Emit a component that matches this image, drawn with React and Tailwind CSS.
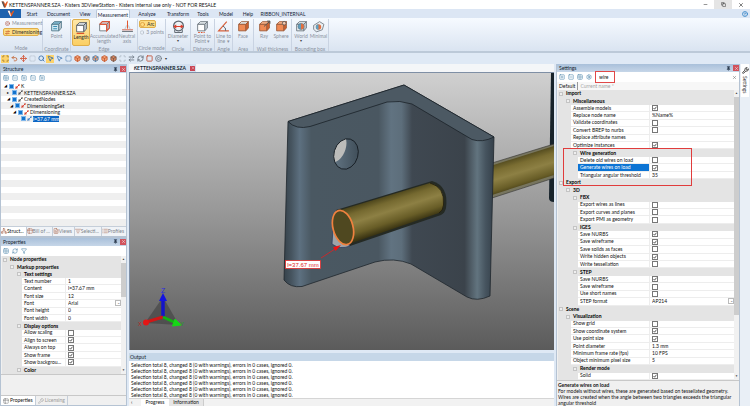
import React from "react";
import {
  Scan, Undo2, Move, Search, MousePointer2, Box, SquareDashed, RefreshCw, Square,
  Circle, Minus, X, Copy, HelpCircle, Wrench, SquarePlus, SquareMinus, Grid2x2, Filter,
  Table2, Network, Pin, Settings as Gear, ArrowRightLeft, Copyright, List, FileText, ListFilter,
} from "lucide-react";

/* ---------- ribbon drawings ---------- */

function Cube({ top = "#e4eaee", front = "#fff", side = "#c3ccd4", line = "#6b747c", children }) {
  return (
    <svg viewBox="0 0 24 24" className="size-[13px] shrink-0" aria-hidden="true">
      <path d="M3 8 L8 3 H21 L16 8Z" fill={top} stroke={line} strokeWidth="1.6" />
      <path d="M16 8 L21 3 V15 L16 20Z" fill={side} stroke={line} strokeWidth="1.6" />
      <path d="M3 8 H16 V20 H3Z" fill={front} stroke={line} strokeWidth="1.6" />
      {children}
    </svg>
  );
}

const ORANGE = { top: "#f9b48c", front: "#f08a55", side: "#d2622f", line: "#9a5a3a" };

const icons = {
  point: (
    <Cube front="#cfe9f5" top="#7fb7cf" line="#4d7587">
      <path d="M6 12h7M6 16h7" stroke="#3b8fb3" strokeWidth="2" />
    </Cube>
  ),
  length: (
    <Cube line="#4f575e">
      <path d="M3 23H17" stroke="#e0522a" strokeWidth="2" />
    </Cube>
  ),
  accumulated: (
    <Cube>
      <path d="M3 8 L8 3 H21 V15 L16 20 V8 H3" fill="none" stroke="#dd5a3c" strokeWidth="2.2" />
    </Cube>
  ),
  neutral: (
    <svg viewBox="0 0 24 24" className="size-[13px]" aria-hidden="true">
      <path d="M12 1V16" stroke="#e0522a" strokeWidth="1.8" />
      <path d="M2 21H22" stroke="#5d666e" strokeWidth="1.8" />
      <path d="M2 18H22" stroke="#dd5a3c" strokeWidth="1.6" />
      <path d="M5 18q4-1 5-8M19 18q-4-1-5-8" fill="none" stroke="#a9b0b6" strokeWidth="1.2" />
    </svg>
  ),
  diameter: (
    <svg viewBox="0 0 24 24" className="size-[13px]" aria-hidden="true">
      <circle cx="12" cy="11" r="9" fill="#eef2f5" stroke="#5d666e" strokeWidth="2.4" />
      <path d="M3 12H21M8 9l-4 3 4 3M16 9l4 3-4 3" fill="none" stroke="#dd3d2a" strokeWidth="2" />
      <path d="M5 18V23H19V18" fill="none" stroke="#5d666e" strokeWidth="1.8" />
    </svg>
  ),
  distance: (
    <Cube>
      <path d="M4 23h12" stroke="#e0522a" strokeWidth="2" strokeDasharray="3 2" />
    </Cube>
  ),
  angle: (
    <svg viewBox="0 0 24 24" className="size-[13px]" aria-hidden="true">
      <path d="M18 3 L3 20 H22" fill="none" stroke="#d8603a" strokeWidth="2.2" />
      <path d="M11 11 q6 3 5 9" fill="none" stroke="#5d666e" strokeWidth="1.8" />
    </svg>
  ),
  face: <Cube {...ORANGE} top="#e4eaee" />,
  ray: (
    <Cube {...ORANGE}>
      <path d="M11 12 L22 2 M17 2h5v5" fill="none" stroke="#555" strokeWidth="1.8" />
    </Cube>
  ),
  sphere: (
    <Cube {...ORANGE}>
      <circle cx="17" cy="6" r="3.4" fill="#f7c6ab" stroke="#555" strokeWidth="1.5" />
    </Cube>
  ),
  world: (
    <Cube front="#e8eef2">
      <circle cx="11" cy="12" r="5.5" fill="#5f9fc0" stroke="#4c6b7a" />
      <path d="M11 6.5a5.5 5.5 0 0 1 0 11z" fill="#e2703f" />
    </Cube>
  ),
  minimal: (
    <svg viewBox="0 0 24 24" className="size-[13px]" aria-hidden="true">
      <path d="M3 10 L14 3 L22 8 L19 18 L8 22 L3 17Z" fill="#e8eef2" stroke="#6b747c" strokeWidth="1.5" />
      <circle cx="12" cy="13" r="5" fill="#e2703f" />
      <path d="M12 8a5 5 0 0 0 0 10z" fill="#5f9fc0" />
    </svg>
  ),
};

function Tool({ icon, lines, width, active, arrow }) {
  return (
    <button
      className={`flex h-[27px] flex-col items-center pt-px ${width} ${
        active ? "rounded-xs border border-[#dfae4a] bg-linear-to-b from-[#fde7a8] to-[#fbcf63] text-[#2b2b2b]" : "text-[#8a92a0]"
      }`}
    >
      {icons[icon]}
      <span className="mt-px flex flex-col items-center text-[5px] leading-[5px] whitespace-nowrap">
        {lines.map((l) => <span key={l}>{l}</span>)}
      </span>
      {arrow && <span className="text-[4px] leading-[4px] text-[#444]">▾</span>}
    </button>
  );
}

function Group({ title, width, children }) {
  return (
    <div className={`flex flex-col justify-between border-r border-[#c9d3e2] ${width}`}>
      <div className="flex justify-center">{children}</div>
      <div className="text-center text-[5px] leading-[6px] whitespace-nowrap text-[#8a92a0]">{title}</div>
    </div>
  );
}

const ribbonTabs = [
  ["Start", "w-[22px]"], ["Document", "w-[31px]"], ["View", "w-[22px]"], ["Measurement", "w-[34px]"],
  ["Analyze", "w-[34px]"], ["Transform", "w-[28px]"], ["Tools", "w-[22px]"], ["Model", "w-[24px]"],
  ["Help", "w-[20px]"], ["RIBBON_INTERNAL", "w-[50px]"],
];

function Ribbon() {
  return (
    <>
      <header className="flex h-[9px] items-center bg-white">
        <svg viewBox="0 0 12 12" className="mx-px size-[7px]" aria-hidden="true">
          <path d="M1 1h4l2 4 3-4h2L8 11H6Z" fill="#e2571f" />
          <path d="M1 1l4 10h2L4 1Z" fill="#555" />
        </svg>
        <h1 className="flex-1 text-[5px] leading-[8px] text-[#111]">
          KETTENSPANNER.SZA - Kisters 3DViewStation - Kisters internal use only - NOT FOR RESALE
        </h1>
        <button aria-label="Minimize" className="flex h-full w-[18px] items-center justify-center"><Minus className="size-[5px]" /></button>
        <button aria-label="Restore" className="flex h-full w-[18px] items-center justify-center bg-[#e5e5e5]"><Copy className="size-[5px]" /></button>
        <button aria-label="Close" className="flex h-full w-[18px] items-center justify-center"><X className="size-[6px]" /></button>
      </header>
      <nav className="flex h-[9px] items-end bg-[#dce6f4]">
        <button aria-label="File" className="flex h-full w-[21px] items-center justify-center bg-[#1f62ae]">
          <svg viewBox="0 0 12 10" className="h-[7px] w-2" aria-hidden="true">
            <path d="M1 1h3l2 4 3-4h2L7 9H5Z" fill="#e2571f" /><path d="M1 1l4 8h1L4 1Z" fill="#fff" />
          </svg>
        </button>
        {ribbonTabs.map(([t, w]) => (
          <button
            key={t}
            className={`h-full text-center text-[5px] leading-[10px] whitespace-nowrap text-[#17253a] ${w} ${
              t === "Measurement" ? "rounded-t-xs border border-b-0 border-[#b9c7da] bg-[#f8fbff]" : ""
            }`}
          >
            {t}
          </button>
        ))}
        <span className="flex-1" />
        <button aria-label="Help" className="mr-[2px] self-center"><HelpCircle className="size-[6px] text-[#2b7fc4]" strokeWidth={3} /></button>
      </nav>
      <section className="flex h-[35px] border-b-2 border-[#bcc9d8] bg-linear-to-b from-[#f6faff] to-[#dae4f1] pt-px">
        <Group title="Mode" width="w-[43px]">
          <div className="flex w-full flex-col gap-px px-[3px] pt-px text-[5px] leading-[7px]">
            <button className="flex items-center gap-[2px] pl-[2px] text-[#8a92a0]"><Copyright className="size-[5px] shrink-0 text-[#b9695a]" strokeWidth={3} />Measurement</button>
            <button className="flex h-2 items-center gap-[2px] rounded-xs border border-[#dfae4a] bg-[#fddc82] pl-px text-[#2b2b2b]"><ArrowRightLeft className="size-[5px] shrink-0 text-[#c5532c]" strokeWidth={3} />Dimensioning</button>
          </div>
        </Group>
        <Group title="Coordinate" width="w-[28px]"><Tool icon="point" lines={["Point"]} width="w-[20px]" /></Group>
        <Group title="Edge" width="w-[67px]">
          <Tool icon="length" lines={["Length"]} width="w-[18px]" active />
          <Tool icon="accumulated" lines={["Accumulated", "length"]} width="w-[28px]" />
          <Tool icon="neutral" lines={["Neutral", "axis"]} width="w-[18px]" />
        </Group>
        <Group title="Circle mode" width="w-[28px]">
          <div className="flex w-full flex-col gap-px px-px pt-px text-[5px] leading-[7px]">
            <button className="flex h-2 w-[17px] items-center gap-[2px] rounded-xs border border-[#dfae4a] bg-[#fddc82] text-[#2b2b2b]"><Circle className="size-[5px] text-[#d98a2b]" strokeWidth={3} />Arc</button>
            <button className="flex items-center gap-[2px] pl-px whitespace-nowrap text-[#8a92a0]"><Circle className="size-[5px]" />3 points</button>
          </div>
        </Group>
        <Group title="Circle" width="w-[25px]"><Tool icon="diameter" lines={["Diameter"]} width="w-[22px]" arrow /></Group>
        <Group title="Distance" width="w-[24px]"><Tool icon="distance" lines={["Point to", "Point ▾"]} width="w-[22px]" /></Group>
        <Group title="Angle" width="w-[18px]"><Tool icon="angle" lines={["Line to", "line ▾"]} width="w-[17px]" /></Group>
        <Group title="Area" width="w-[21px]"><Tool icon="face" lines={["Face"]} width="w-[18px]" /></Group>
        <Group title="Wall thickness" width="w-[38px]">
          <Tool icon="ray" lines={["Ray"]} width="w-[17px]" />
          <Tool icon="sphere" lines={["Sphere"]} width="w-[17px]" />
        </Group>
        <Group title="Bounding box" width="w-[37px]">
          <Tool icon="world" lines={["World"]} width="w-[17px]" arrow />
          <Tool icon="minimal" lines={["Minimal"]} width="w-[18px]" />
        </Group>
      </section>
    </>
  );
}

const quick = [
  [Scan, "text-[#8c6a2c]", true], [Undo2, "text-[#c46a3c]"], [Move, "text-[#d2573a]"],
  [SquareDashed, "text-[#b9c3d0]"], [Search, "text-[#3f74ad]"], [MousePointer2, "text-[#3f74ad]", true],
  [MousePointer2, "text-[#5586bb]"], [SquareDashed, "text-[#6c93c0]"], [Box, "fill-[#f2a074] text-[#c65a30]"],
  [Box, "fill-[#e8a98a] text-[#6c7782]"], [Box, "fill-[#f2a074] text-[#4a7fae]"], [Box, "fill-[#f2a074] text-[#c65a30]"],
  [Box, "fill-[#d9835c] text-[#7a5a4c]"], [Scan, "text-[#a9b3c0]"], [ArrowRightLeft, "text-[#6c7782]"],
  [RefreshCw, "text-[#6c7782]"], [Square, "text-[#c4553a]"], [Copyright, "text-[#6c7782]"],
];

function QuickBar() {
  return (
    <div className="flex h-[11px] items-center gap-px bg-[#dfe9f5] pl-px">
      {quick.map(([Icon, c, on], i) => (
        <button key={i} aria-label={`Quick action ${i + 1}`} className={`flex size-2 items-center justify-center ${on ? "bg-[#fdd36b]" : ""}`}>
          <Icon className={`size-[7px] ${c}`} strokeWidth={3} />
        </button>
      ))}
      <span className="pl-[2px] text-[4px] text-[#333]">▾</span>
    </div>
  );
}

/* ---------- shared panel parts ---------- */

function PanelHeader({ title }) {
  return (
    <div className="flex h-2 shrink-0 items-center gap-[2px] bg-linear-to-b from-[#a9c0da] to-[#c6d6e8] pl-[2px]">
      <h2 className="flex-1 text-[5px] leading-[8px] text-[#111c2c]">{title}</h2>
      <button aria-label={`Pin ${title}`}><Pin className="size-[5px] fill-current text-[#2d3c50]" /></button>
      <button aria-label={`Close ${title}`} className="flex size-[6px] items-center justify-center bg-[#d0525c]"><X className="size-[5px] text-white" /></button>
    </div>
  );
}

function Bar({ list, children }) {
  return (
    <div className="flex h-[10px] shrink-0 items-center gap-[3px] bg-white pl-[2px]">
      {list.map((Icon, i) => (
        <button key={i} aria-label={`Panel action ${i + 1}`}><Icon className="size-[6px] text-[#3d7ba3]" strokeWidth={2} /></button>
      ))}
      {children}
    </div>
  );
}

const indents = {
  0: "w-[6px]", 1: "w-[13px]", 2: "w-[20px]",
};

function Row({ row, nameCol, id }) {
  const [kind, level, name, value, selected] = row;
  if (kind === "h") {
    return (
      <div className="flex items-center overflow-hidden bg-[#e4e4e4]">
        <span className={`flex shrink-0 justify-end pr-px ${indents[level]}`}>
          <span className="flex size-1 items-center justify-center border border-[#c4c4c4] bg-[#efefef]" />
        </span>
        <h3 className="pl-[2px] text-[5px] leading-[7px] font-bold text-black">{name}</h3>
      </div>
    );
  }
  return (
    <div className="flex overflow-hidden bg-[#e4e4e4]">
      <span className={`shrink-0 ${indents[level]}`} />
      <div className="flex min-w-0 flex-1 items-center border-b border-[#ededed] bg-white">
        <label
          htmlFor={id}
          className={`mr-auto min-w-0 flex-1 truncate pl-[2px] text-[5px] leading-[7px] ${selected ? "bg-[#0c74d4] text-white" : "text-[#111]"}`}
        >
          {name}
        </label>
        <div className={`flex h-full items-center border-l border-[#ededed] pl-[2px] text-[5px] leading-[7px] text-[#111] ${nameCol}`}>
          {kind === "c" && (
            <span className="relative flex">
              <input
                id={id}
                type="checkbox"
                defaultChecked={value}
                className="peer size-[6px] appearance-none border border-[#777] bg-white"
              />
              <svg viewBox="0 0 6 6" className="pointer-events-none absolute inset-0 hidden size-[6px] peer-checked:block" aria-hidden="true">
                <path d="M1.500 3 L2.600 4.200 L4.500 1.700" fill="none" stroke="#333" strokeWidth="0.8" />
              </svg>
            </span>
          )}
          {kind === "t" && <input id={id} defaultValue={value} className="h-[6px] w-full min-w-0 bg-transparent" />}
          {kind === "s" && (
            <>
              <select id={id} className="h-[6px] min-w-0 flex-1 appearance-none bg-transparent"><option>{value}</option></select>
              <span className="flex size-[6px] items-center justify-center border border-[#bbb] text-[4px] leading-[4px] text-[#555]">⌄</span>
            </>
          )}
        </div>
      </div>
    </div>
  );
}

function Scrollbar({ thumb }) {
  return (
    <div className="flex w-[5px] shrink-0 flex-col items-center bg-[#f1f1f1] text-[3px] leading-[7px] text-[#444]">
      <span>▲</span>
      <span className={`w-full bg-[#cdcdcd] ${thumb}`} />
      <span className="mt-auto">▼</span>
    </div>
  );
}

/* ---------- left column ---------- */

const tree = [
  ["pl-[3px]", "◢", "K", "#d8402e"],
  ["pl-[6px]", "▸", "KETTENSPANNER.SZA", "#555"],
  ["pl-[6px]", "◢", "CreatedNodes", "#555"],
  ["pl-[9px]", "◢", "DimensioningSet", "#d8402e"],
  ["pl-[12px]", "◢", "Dimensioning", "#d8402e"],
  ["pl-[15px]", "", "l=37.67 mm", "#3f7fc8", true],
];

function Structure() {
  return (
    <section className="flex flex-[173] flex-col overflow-hidden border border-[#b5c3d3] bg-white">
      <PanelHeader title="Structure" />
      <Bar list={[Grid2x2, SquareMinus, SquarePlus, SquareMinus, SquarePlus]} />
      <ul className="grid min-h-0 flex-1 auto-rows-fr">
        {Array.from({ length: 22 }, (_, i) => {
          const n = tree[i];
          return (
            <li key={i} className={`flex items-center gap-px text-[5px] leading-[6px] odd:bg-white even:bg-[#efefef] ${n ? n[0] : ""}`}>
              {n && (
                <>
                  <span className="w-1 text-[4px]">{n[1]}</span>
                  <span className="size-[5px] border border-[#7fb6ea] bg-[#1473cc]" />
                  <svg viewBox="0 0 10 10" className="size-[5px]" aria-hidden="true">
                    <path d="M1 9L9 1" stroke={n[3]} strokeWidth="1.6" /><path d="M1 5h4v4H1zM6 1h3v3H6z" fill={n[3]} />
                  </svg>
                  <span className={n[4] ? "bg-[#0c66c4] text-white" : "text-[#111]"}>{n[2]}</span>
                </>
              )}
            </li>
          );
        })}
      </ul>
      <div className="flex h-[10px] shrink-0 border-t border-[#c5ced9] bg-[#f0f3f7] text-[5px] leading-[9px] text-[#7d838b]">
        {[["Struct...", Network], ["Bill of ...", Table2], ["Views", FileText], ["Selecti...", ListFilter], ["Profiles", List]].map(([t, Icon], i) => (
          <button key={t} className={`flex flex-auto items-center border-r border-[#c5ced9] whitespace-nowrap last:border-r-0 ${i === 0 ? "bg-white text-[#111]" : ""}`}>
            <Icon className="size-[6px] shrink-0 text-[#a8664c]" />{t}
          </button>
        ))}
      </div>
    </section>
  );
}

const properties = [
  ["h", 0, "Node properties"], ["h", 1, "Markup properties"], ["h", 2, "Text settings"],
  ["t", 2, "Text number", "1"], ["t", 2, "Content", "l=37.67 mm"], ["t", 2, "Font size", "12"],
  ["s", 2, "Font", "Arial"], ["t", 2, "Font height", "0"], ["t", 2, "Font width", "0"],
  ["h", 2, "Display options"], ["c", 2, "Allow scaling", false], ["c", 2, "Align to screen", true],
  ["c", 2, "Always on top", true], ["c", 2, "Show frame", true], ["c", 2, "Show backgrou...", true],
  ["h", 2, "Color"],
];

function Properties() {
  return (
    <section className="flex flex-[169] flex-col overflow-hidden border border-[#b5c3d3] bg-[#f0f0f0]">
      <PanelHeader title="Properties" />
      <Bar list={[Grid2x2, RefreshCw, Filter]} />
      <div className="flex min-h-0 flex-1 border-b border-[#c8c8c8]">
        <div className="grid min-w-0 flex-1 auto-rows-fr pl-px">
          {properties.map((r, i) => <Row key={i} row={r} id={`prop-${i}`} nameCol="w-[56px]" />)}
        </div>
        <Scrollbar thumb="h-[34px]" />
      </div>
      <div className="h-[21px] shrink-0 border-b border-[#c8c8c8]" />
      <div className="flex h-[9px] shrink-0 text-[5px] leading-[9px]">
        <button className="flex items-center gap-px bg-white px-[2px] text-[#111]"><Table2 className="size-[6px] text-[#777]" />Properties</button>
        <button className="flex items-center gap-px border-x border-[#c5ced9] px-[2px] text-[#9a9a9a]"><Wrench className="size-[6px]" />Licensing</button>
      </div>
    </section>
  );
}

/* ---------- 3D view ---------- */

function Scene() {
  return (
    <svg viewBox="130 73 424 277" preserveAspectRatio="xMidYMid slice" className="block size-full font-['Liberation_Sans',sans-serif]" role="img" aria-label="3D model">
      <defs>
        <linearGradient id="sky" x1="0" y1="0" x2="0" y2="1">
          <stop offset="0" stopColor="#d0d0d0" /><stop offset="0.5" stopColor="#989898" /><stop offset="1" stopColor="#5b5b5b" />
        </linearGradient>
        <linearGradient id="front" gradientUnits="userSpaceOnUse" x1="284" y1="0" x2="494" y2="0">
          <stop offset="0" stopColor="#36424b" /><stop offset="0.035" stopColor="#46545f" />
          <stop offset="0.075" stopColor="#5d7080" /><stop offset="0.13" stopColor="#4a5862" />
          <stop offset="0.45" stopColor="#4a5761" /><stop offset="0.51" stopColor="#617381" />
          <stop offset="0.56" stopColor="#5d6e7b" /><stop offset="0.61" stopColor="#3f4851" />
          <stop offset="0.86" stopColor="#3b434b" /><stop offset="0.92" stopColor="#62747f" />
          <stop offset="0.96" stopColor="#46545f" /><stop offset="1" stopColor="#35404a" />
        </linearGradient>
        <linearGradient id="rod" gradientUnits="userSpaceOnUse" x1="384" y1="196" x2="395" y2="230">
          <stop offset="0" stopColor="#4a431a" /><stop offset="0.2" stopColor="#756930" />
          <stop offset="0.45" stopColor="#8d8044" /><stop offset="0.75" stopColor="#685d27" /><stop offset="1" stopColor="#2f2a0e" />
        </linearGradient>
        <linearGradient id="rodBack" gradientUnits="userSpaceOnUse" x1="521" y1="154" x2="531" y2="187">
          <stop offset="0" stopColor="#4a431a" /><stop offset="0.25" stopColor="#7a6d32" />
          <stop offset="0.5" stopColor="#8d8044" /><stop offset="0.8" stopColor="#685d27" /><stop offset="1" stopColor="#3a3413" />
        </linearGradient>
        <linearGradient id="bore" x1="0" y1="0" x2="1" y2="0">
          <stop offset="0" stopColor="#6a7d8c" /><stop offset="1" stopColor="#33404a" />
        </linearGradient>
        <clipPath id="holeClip"><ellipse cx="346" cy="154" rx="12" ry="15.5" transform="rotate(16 346 154)" /></clipPath>
      </defs>
      <rect x="130" y="73" width="424" height="277" fill="url(#sky)" />

      <path d="M551 73H554V202Q549 202 549 198Z" fill="#17232b" />
      <path d="M492 163L554 144V178L492 198Z" fill="#77755f" stroke="#333" strokeWidth="0.6" />
      <path d="M492 165.500L554 146V175L492 195Z" fill="url(#rodBack)" />

      <path d="M288 121.500L404 85L494 137L490 296Q477 302 467 297L411 264Q394 257 375 262L302 286.500Q290 288 284 280Z" fill="url(#front)" stroke="#1e262c" strokeWidth="0.8" />
      <path d="M288 121.500L404 85L494 137Q482 143 472 139.500L412 104Q400 100 387 102L310 126.500Q296 130 288 121.500Z" fill="#4c5963" stroke="#1b2228" strokeWidth="0.8" />

      <g clipPath="url(#holeClip)">
        <rect x="328" y="134" width="40" height="40" fill="url(#bore)" />
        <ellipse cx="334" cy="146" rx="12" ry="17" transform="rotate(16 334 146)" fill="#bcbcba" />
      </g>
      <ellipse cx="346" cy="154" rx="12" ry="15.500" transform="rotate(16 346 154)" fill="none" stroke="#171e24" strokeWidth="0.9" />

      <path d="M336 210L432 181Q449 186 446 208Q445 213 441 215L350 246Z" fill="#252a24" />
      <path d="M337 211L430 183Q445 187 443.500 205Q443 211 439 213L349 244Z" fill="url(#rod)" />
      <path d="M430 183Q445 187 443.500 205Q443 211 439 213" fill="none" stroke="#1f1c0c" strokeWidth="0.8" />

      <path d="M333 228L332 244Q340 250 350 246L342 240Z" fill="#9fa5a9" stroke="#24365c" strokeWidth="0.7" />
      <ellipse cx="343" cy="227.500" rx="10" ry="17.500" transform="rotate(-15 343 227.500)" fill="#4f4820" stroke="#f0813f" strokeWidth="1.7" />
      <path d="M321 258L335 249" stroke="#e32020" strokeWidth="0.8" />
      <path d="M341 245L333 247.200L335.600 251Z" fill="#f01414" />
      <rect x="285.500" y="260.500" width="35" height="8" fill="#fff" stroke="#e02a2a" strokeWidth="0.8" />
      <text x="303" y="267" textAnchor="middle" fill="#df1d1d" className="text-[6px]">l=37.67 mm</text>

      <path d="M163 297L145 323L179 325Z" fill="#3d3d3d" opacity="0.55" />
      <path d="M163 317V300" stroke="#1414c8" strokeWidth="3.500" />
      <path d="M163 293L167 301H159Z" fill="#1414e0" />
      <path d="M163 317L148 321.500" stroke="#d01616" strokeWidth="3" />
      <circle cx="146" cy="322.500" r="3" fill="#e31515" />
      <path d="M163 317L176 323" stroke="#12b412" strokeWidth="3" />
      <path d="M172.500 326L175 319L181 325Z" fill="#16d816" stroke="#16d816" />
      <text x="161" y="293" fill="#2a2ae0" className="text-[7px]">Z</text>
      <text x="138" y="326" fill="#c62323" className="text-[6px]">X</text>
      <text x="180" y="326" fill="#17a317" className="text-[6px]">Y</text>
    </svg>
  );
}

function Center() {
  return (
    <main className="flex min-w-0 flex-1 flex-col">
      <div className="flex h-2 shrink-0 bg-[#f4f6f8]">
        <div className="flex w-[67px] items-center justify-end gap-[4px] bg-linear-to-r from-white via-[#d3e0ef] to-[#d3e0ef] [clip-path:polygon(8px_0,100%_0,100%_100%,0_100%)]">
          <span className="text-[5px] leading-[8px] font-bold text-[#111c2c]">KETTENSPANNER.SZA</span>
          <button aria-label="Close document" className="mr-px flex size-[5px] items-center justify-center bg-[#c94453]"><X className="size-[4px] text-white" /></button>
        </div>
      </div>
      <div className="min-h-0 flex-1 overflow-hidden border-t border-l border-[#7f8fa5]"><Scene /></div>
      <section className="mt-[3px] flex h-[53px] shrink-0 flex-col bg-white">
        <h2 className="h-2 bg-[#c6d7e8] pl-px text-[5px] leading-[8px] text-[#111c2c]">Output</h2>
        <div className="min-h-0 flex-1 pt-px pl-[2px] text-[5px] leading-[6px] text-[#111]">
          {Array.from({ length: 6 }, (_, i) => (
            <p key={i}>Selection total 8, changed 8 (0 with warnings), errors in 0 cases, ignored 0.</p>
          ))}
        </div>
        <div className="flex h-2 shrink-0 border-t border-[#d5d5d5] bg-[#f2f2f2] text-[5px] leading-[7px] text-[#111]">
          <span className="w-3 pl-[2px]">‹</span>
          <button className="w-[28px] bg-white">Progress</button>
          <button className="w-[35px] border-r border-[#ccc] bg-[#e6e6e6]">Information</button>
        </div>
      </section>
    </main>
  );
}

/* ---------- settings ---------- */

const settings = [
  ["h", 0, "Import"], ["h", 1, "Miscellaneous"],
  ["c", 1, "Assemble models", true], ["t", 1, "Replace node name", "%Name%"],
  ["c", 1, "Validate coordinates", false], ["c", 1, "Convert BREP to nurbs", false],
  ["t", 1, "Replace attribute names", ""], ["c", 1, "Optimize instances", true],
  ["h", 2, "Wire generation"], ["c", 2, "Delete old wires on load", false],
  ["c", 2, "Generate wires on load", true, true], ["t", 2, "Triangular angular threshold", "35"],
  ["h", 0, "Export"], ["h", 1, "3D"], ["h", 2, "FBX"],
  ["c", 2, "Export wires as lines", false], ["c", 2, "Export curves and planes", false],
  ["c", 2, "Export PMI as geometry", false],
  ["h", 2, "IGES"], ["c", 2, "Save NURBS", true], ["c", 2, "Save wireframe", true],
  ["c", 2, "Save solids as faces", false], ["c", 2, "Write hidden objects", true],
  ["c", 2, "Write tessellation", false],
  ["h", 2, "STEP"], ["c", 2, "Save NURBS", true], ["c", 2, "Save wireframe", false],
  ["c", 2, "Use short names", false], ["s", 2, "STEP format", "AP214"],
  ["h", 0, "Scene"], ["h", 1, "Visualization"], ["c", 1, "Show grid", false],
  ["c", 1, "Show coordinate system", true], ["c", 1, "Use point size", true],
  ["t", 1, "Point diameter", "1.3 mm"], ["t", 1, "Minimum frame rate (fps)", "10 FPS"],
  ["t", 1, "Object minimum pixel size", "5"], ["h", 2, "Render mode"], ["c", 2, "Solid", true],
];

function Settings() {
  return (
    <aside className="flex w-[184px] shrink-0 flex-col border-x border-[#b5c3d3] bg-[#f0f0f0]">
      <PanelHeader title="Settings" />
      <Bar list={[SquarePlus, SquareMinus, Grid2x2, Gear]}>
        <input aria-label="Filter settings" defaultValue="wire" className="z-10 -my-px h-3 w-[20px] border border-[#e04848] pl-[3px] text-[5px] text-[#111]" />
        <button aria-label="Clear filter" className="mr-[2px] ml-auto"><X className="size-[5px] text-[#555]" /></button>
      </Bar>
      <div className="flex h-2 shrink-0 bg-[#f7f7f7] text-[5px] leading-[8px]">
        <button className="border-r border-[#999] px-[2px] text-[#111]">Default</button>
        <button className="px-[2px] text-[#a5a5a5]">Current name *</button>
      </div>
      <div className="relative flex min-h-0 flex-1">
        <div className="grid min-w-0 flex-1 auto-rows-fr pl-px">
          {settings.map((r, i) => <Row key={i} row={r} id={`set-${i}`} nameCol="w-[85px]" />)}
        </div>
        <Scrollbar thumb="h-[218px]" />
        <div className="pointer-events-none absolute top-[58px] left-[6px] h-[38px] w-[129px] border border-[#e03c3c]" />
      </div>
      <div className="h-[26px] shrink-0 border-t border-[#c8c8c8] px-px pt-px text-[5px] leading-[6px] text-[#111]">
        <h3 className="font-bold">Generate wires on load</h3>
        <p>
          For models without wires, these are generated based on tessellated geometry. Wires are created when the angle between two triangles exceeds the triangular angular threshold
        </p>
      </div>
    </aside>
  );
}

export default function App() {
  return (
    <div className="flex h-screen w-full flex-col overflow-hidden bg-[#dfe9f5] font-['Lato','Noto_Sans',sans-serif]">
      <Ribbon />
      <QuickBar />
      <div className="flex min-h-0 flex-1">
        <div className="flex w-[127px] shrink-0 flex-col">
          <Structure />
          <Properties />
        </div>
        <div className="w-[2px] shrink-0" />
        <Center />
        <div className="w-[2px] shrink-0" />
        <Settings />
        <div className="flex w-[10px] shrink-0 flex-col items-center bg-[#e9eff6]">
          <button className="flex flex-col items-center gap-[2px] bg-white py-[3px] text-[5px] leading-[8px] text-[#333]">
            <Wrench className="size-[7px]" strokeWidth={3} />
            <span className="[writing-mode:vertical-rl]">Settings</span>
          </button>
        </div>
      </div>
    </div>
  );
}
